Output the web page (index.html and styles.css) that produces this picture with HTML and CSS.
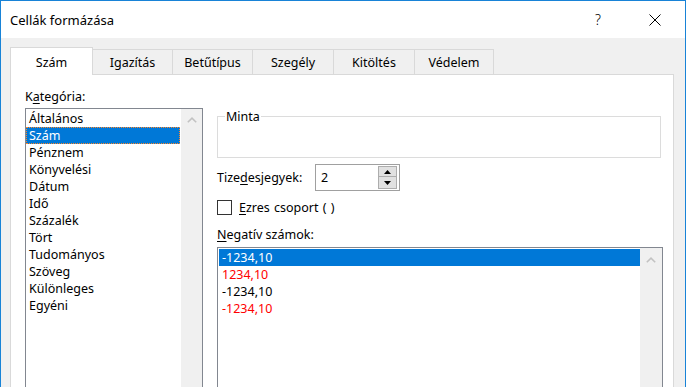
FILE: index.html
```html
<!DOCTYPE html>
<html lang="hu">
<head>
<meta charset="utf-8">
<title>Cellák formázása</title>
<link rel="stylesheet" href="styles.css">
</head>
<body>
<div class="window">
  <div class="titlebar">
    <div class="title">Cellák formázása</div>
    <div class="tb-btn help">?</div>
    <div class="tb-btn close">
      <svg width="12" height="12" viewBox="0 0 12 12"><path d="M0.5 0.5 L11.5 11.5 M11.5 0.5 L0.5 11.5" stroke="#000" stroke-width="1" fill="none"/></svg>
    </div>
  </div>
  <div class="content">
    <div class="tabs">
      <div class="tab active">Szám</div>
      <div class="tab">Igazítás</div>
      <div class="tab">Betűtípus</div>
      <div class="tab">Szegély</div>
      <div class="tab">Kitöltés</div>
      <div class="tab">Védelem</div>
    </div>
    <div class="panel">
      <div class="col-left">
        <div class="label">K<u>a</u>tegória:</div>
        <div class="listbox cat">
          <div class="items">
            <div class="item">Általános</div>
            <div class="item sel focus">Szám</div>
            <div class="item">Pénznem</div>
            <div class="item">Könyvelési</div>
            <div class="item">Dátum</div>
            <div class="item">Idő</div>
            <div class="item">Százalék</div>
            <div class="item">Tört</div>
            <div class="item">Tudományos</div>
            <div class="item">Szöveg</div>
            <div class="item">Különleges</div>
            <div class="item">Egyéni</div>
          </div>
          <div class="scrollbar">
            <svg width="10" height="6" viewBox="0 0 10 6"><polyline points="0.8,5.3 5,1.2 9.2,5.3" fill="none" stroke="#c2c2c2" stroke-width="1.6"/></svg>
          </div>
        </div>
      </div>
      <div class="col-right">
        <div class="groupbox">
          <span class="legend">Minta</span>
        </div>
        <div class="spin-row">
          <div class="spin-label">Tize<u>d</u>esjegyek:</div>
          <div class="spin">
            <div class="spin-val">2</div>
            <div class="spin-btns">
              <div class="sbtn"><svg width="7" height="4" viewBox="0 0 7 4"><polygon points="0,4 3.5,0 7,4" fill="#000"/></svg></div>
              <div class="sbtn down"><svg width="7" height="4" viewBox="0 0 7 4"><polygon points="0,0 7,0 3.5,4" fill="#000"/></svg></div>
            </div>
          </div>
        </div>
        <div class="check-row">
          <div class="checkbox"></div>
          <div class="check-text"><u>E</u>zres csoport (&nbsp;)</div>
        </div>
        <div class="label neg-label"><u>N</u>egatív számok:</div>
        <div class="listbox neg">
          <div class="items">
            <div class="item sel">-1234,10</div>
            <div class="item red">1234,10</div>
            <div class="item">-1234,10</div>
            <div class="item red">-1234,10</div>
          </div>
          <div class="scrollbar">
            <svg width="10" height="6" viewBox="0 0 10 6"><polyline points="0.8,5.3 5,1.2 9.2,5.3" fill="none" stroke="#c2c2c2" stroke-width="1.6"/></svg>
          </div>
        </div>
      </div>
    </div>
  </div>
</div>
</body>
</html>
```
FILE: styles.css
```css
* { box-sizing: border-box; }
html, body { margin: 0; padding: 0; }
body {
  font-family: "Noto Sans", "Open Sans", sans-serif;
  font-size: 12.5px;
  line-height: 17px;
  color: #000;
  background: #fff;
}
u { text-decoration: underline; text-underline-offset: 2px; }

.window {
  width: 686px;
  height: 387px;
  border: 1px solid #1883d7;
  border-bottom: none;
  background: #f0f0f0;
  overflow: hidden;
}

.titlebar {
  height: 37px;
  background: #fff;
  display: flex;
  align-items: center;
  padding: 0 7px 0 9px;
}
.title { flex: 1; font-size: 13px; padding-top: 1px; }
.tb-btn {
  width: 46px;
  height: 37px;
  display: flex;
  align-items: center;
  justify-content: center;
}
.help { font-size: 14px; margin-right: 11px; font-weight: 300; }

.content { padding: 9px 11px 0 9px; }

.tabs {
  display: flex;
  align-items: flex-end;
  height: 27px;
}
.tab {
  height: 25px;
  border-top: 1px solid #d9d9d9;
  border-right: 1px solid #d9d9d9;
  padding-top: 4px;
  text-align: center;
  background: #f0f0f0;
  width: 80px;
}
.tab:nth-child(4), .tab:nth-child(5) { width: 81px; }
.tab:nth-child(6) { width: 79px; }
.tab.active {
  width: 83px;
  height: 28px;
  margin-bottom: -1px;
  background: #fff;
  border-left: 1px solid #d9d9d9;
  padding-top: 6px;
  position: relative;
  z-index: 1;
}

.panel {
  background: #fff;
  border: 1px solid #d9d9d9;
  border-bottom: none;
  display: grid;
  grid-template-columns: 178px 446px;
  column-gap: 14px;
  padding: 13px 10px 0 14px;
}

.label { height: 17px; white-space: nowrap; }

.listbox {
  border: 1px solid #828790;
  background: #fff;
  display: flex;
}
.cat { margin-top: 3px; height: 300px; }
.cat .items { width: 154px; padding-top: 1px; }
.cat .scrollbar { width: 21px; margin-left: 1px; }

.scrollbar {
  background: #f0f0f0;
  display: flex;
  justify-content: center;
  align-items: flex-start;
  padding-top: 8px;
}

.item { height: 17px; padding-left: 3px; padding-top: 1px; line-height: 16px; white-space: nowrap; }
.item.sel { background: #0078d7; color: #fff; }
.item.focus { outline: 1px dotted #ff8728; outline-offset: -1px; }
.item.red { color: #ff0000; }

.col-right { display: flex; flex-direction: column; }

.groupbox {
  margin-top: 28px;
  width: 444px;
  height: 42px;
  border: 1px solid #dcdcdc;
  position: relative;
}
.legend {
  position: absolute;
  top: -9px;
  left: 7px;
  background: #fff;
  padding: 0 1px;
}

.spin-row {
  margin-top: 6px;
  height: 27px;
  display: flex;
  align-items: center;
}
.spin-label { width: 98px; white-space: nowrap; }
.spin {
  width: 85px;
  height: 27px;
  border: 1px solid #a0a0a0;
  display: flex;
}
.spin-val { flex: 1; padding-left: 5px; line-height: 25px; }
.spin-btns {
  width: 19px;
  margin: 1px 2px 0 0;
  display: flex;
  flex-direction: column;
}
.sbtn {
  height: 11px;
  border: 1px solid #adadad;
  background: #e1e1e1;
  display: flex;
  align-items: center;
  justify-content: center;
}
.sbtn.down { height: 12px; border-top: none; }

.check-row {
  margin-top: 8px;
  height: 17px;
  display: flex;
  align-items: center;
  gap: 7px;
}
.check-text { word-spacing: 1px; }
.checkbox {
  width: 15px;
  height: 15px;
  border: 1px solid #333;
  background: #fff;
}

.neg-label { margin-top: 10px; }
.neg { margin-top: 4px; height: 160px; padding: 1px 0 0 1px; }
.neg .items { width: 421px; }
.neg .scrollbar { width: 22px; margin-top: -1px; padding-top: 9px; }
```
